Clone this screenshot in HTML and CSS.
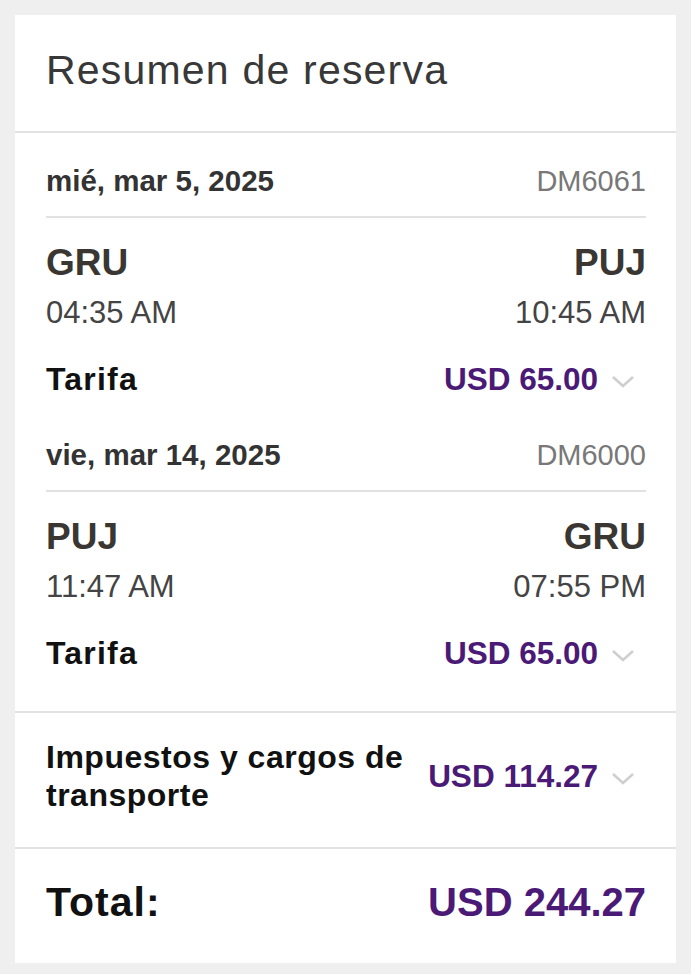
FILE: index.html
```html
<!DOCTYPE html>
<html lang="es">
<head>
<meta charset="utf-8">
<title>Resumen de reserva</title>
<link rel="stylesheet" href="styles.css">
</head>
<body>
<div class="card">
  <div class="card-header">
    <h1 class="title">Resumen de reserva</h1>
  </div>

  <div class="flights">
    <div class="segment">
      <div class="seg-head">
        <span class="date">mié, mar 5, 2025</span>
        <span class="flight-no">DM6061</span>
      </div>
      <div class="row airports">
        <span>GRU</span>
        <span>PUJ</span>
      </div>
      <div class="row times">
        <span>04:35 AM</span>
        <span>10:45 AM</span>
      </div>
      <div class="row price-row">
        <span class="label">Tarifa</span>
        <span class="price">
          <span class="amount">USD 65.00</span>
          <svg class="chev" width="24" height="14" viewBox="0 0 24 14"><path d="M2 2 L12 11 L22 2" fill="none" stroke="#cfcfcf" stroke-width="2.6"/></svg>
        </span>
      </div>
    </div>

    <div class="segment">
      <div class="seg-head">
        <span class="date">vie, mar 14, 2025</span>
        <span class="flight-no">DM6000</span>
      </div>
      <div class="row airports">
        <span>PUJ</span>
        <span>GRU</span>
      </div>
      <div class="row times">
        <span>11:47 AM</span>
        <span>07:55 PM</span>
      </div>
      <div class="row price-row">
        <span class="label">Tarifa</span>
        <span class="price">
          <span class="amount">USD 65.00</span>
          <svg class="chev" width="24" height="14" viewBox="0 0 24 14"><path d="M2 2 L12 11 L22 2" fill="none" stroke="#cfcfcf" stroke-width="2.6"/></svg>
        </span>
      </div>
    </div>
  </div>

  <div class="taxes">
    <span class="label taxes-label">Impuestos y cargos de transporte</span>
    <span class="price">
      <span class="amount">USD 114.27</span>
      <svg class="chev" width="24" height="14" viewBox="0 0 24 14"><path d="M2 2 L12 11 L22 2" fill="none" stroke="#cfcfcf" stroke-width="2.6"/></svg>
    </span>
  </div>

  <div class="total">
    <span class="total-label">Total:</span>
    <span class="total-amount">USD 244.27</span>
  </div>
</div>
</body>
</html>
```

FILE: styles.css
```css
* { box-sizing: border-box; }

body {
  margin: 0;
  padding: 15px;
  background: #efefef;
  font-family: "Liberation Sans", Arial, sans-serif;
}

.card {
  width: 661px;
  height: 948px;
  background: #ffffff;
  display: flex;
  flex-direction: column;
}

.card-header {
  height: 118px;
  padding: 0 31px;
  display: flex;
  align-items: center;
  border-bottom: 2px solid #e2e2e2;
}

.title {
  margin: 0;
  font-weight: 400;
  font-size: 41px;
  letter-spacing: 1.2px;
  color: #383838;
  padding-bottom: 6px;
}

.flights {
  padding: 33px 30px 38px 31px;
  border-bottom: 2px solid #e2e2e2;
}

.segment + .segment {
  margin-top: 41px;
}

.seg-head {
  display: flex;
  justify-content: space-between;
  align-items: center;
  height: 52px;
  padding-bottom: 20px;
  border-bottom: 2px solid #e2e2e2;
}

.date {
  font-size: 29.5px;
  font-weight: 700;
  color: #333333;
  line-height: 30px;
}

.flight-no {
  font-size: 29px;
  color: #787878;
  line-height: 30px;
}

.row {
  display: flex;
  justify-content: space-between;
  align-items: center;
}

.airports {
  margin-top: 23px;
  height: 44px;
  font-size: 37px;
  font-weight: 700;
  color: #3a3733;
}

.times {
  margin-top: 10px;
  height: 36px;
  font-size: 31px;
  color: #444444;
}

.price-row {
  margin-top: 28px;
  height: 40px;
}

.label {
  font-size: 32px;
  font-weight: 700;
  letter-spacing: 1.2px;
  color: #111111;
}

.price {
  display: flex;
  align-items: center;
  flex-shrink: 0;
  white-space: nowrap;
}

.amount {
  font-size: 31.5px;
  font-weight: 700;
  color: #4a1a76;
}

.chev {
  margin-left: 13px;
  margin-right: 11px;
  margin-top: 6px;
}

.taxes {
  height: 136px;
  padding: 0 30px 8px 31px;
  display: flex;
  justify-content: space-between;
  align-items: center;
  border-bottom: 2px solid #e2e2e2;
}

.taxes-label {
  flex: 0 1 380px;
  line-height: 38px;
  letter-spacing: 0.5px;
}

.total {
  flex: 1;
  padding: 0 30px 8px 31px;
  display: flex;
  justify-content: space-between;
  align-items: center;
}

.total-label {
  font-size: 41px;
  font-weight: 700;
  letter-spacing: 1px;
  color: #111111;
}

.total-amount {
  font-size: 40px;
  font-weight: 700;
  color: #4a1a76;
}
```
